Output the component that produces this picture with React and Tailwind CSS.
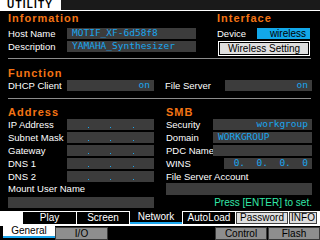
import React from "react";

const Title = ({ children, className = "" }) => (
  <div className={`h-[11px] text-[11px] leading-[11px] font-bold tracking-[1px] text-[#f47414] whitespace-nowrap ${className}`}>
    {children}
  </div>
);

const Label = ({ w, children }) => (
  <div className={`${w} shrink-0 text-[9.5px] leading-[11px] text-white whitespace-nowrap`}>{children}</div>
);

const Field = ({ w, right, h = "h-[11px]", children }) => (
  <div
    className={`${w} ${h} shrink-0 bg-[#3c3c3c] flex items-center ${right ? "justify-end pr-[4px]" : "pl-[5px]"} text-[#1aa6ee] text-[9.5px] leading-[10px] font-['DejaVu_Sans_Mono',monospace] whitespace-pre`}
  >
    <span className="-mt-[1px]">{children}</span>
  </div>
);

const IpField = () => (
  <div className="w-[87px] h-[11px] shrink-0 bg-[#3c3c3c] flex items-end pb-[2px]">
    <span className="w-px h-px bg-[#1aa6ee] ml-[21px]" />
    <span className="w-px h-px bg-[#1aa6ee] ml-[21px]" />
    <span className="w-px h-px bg-[#1aa6ee] ml-[22px]" />
  </div>
);

const Sep = () => <div className="ml-[8px] w-[303px] h-px bg-[#8c8c8c] shrink-0" />;

const DarkTab = ({ w, children }) => (
  <div className={`${w} mt-[1px] h-[12px] bg-black text-white text-[10px] leading-[12px] text-center`}>{children}</div>
);

const LightTab = ({ w, children }) => (
  <div className={`${w} mt-[1px] h-[12px] bg-[#dedede] border border-[#404040] text-black text-[10px] leading-[10px] text-center`}>
    {children}
  </div>
);

const GrayTab = ({ w, children }) => (
  <div className={`${w} mt-[1px] h-[13px] bg-[#8e8e8e] border border-[#3a3a3a] text-black text-[10px] leading-[11px] text-center`}>
    {children}
  </div>
);

export default function App() {
  const ipRows = ["IP Address", "Subnet Mask", "Gateway", "DNS 1", "DNS 2"];

  return (
    <div className="w-[320px] h-[240px] bg-black overflow-hidden flex flex-col font-['Liberation_Sans',Arial,sans-serif]">
      {/* header */}
      <div className="h-[11px] flex shrink-0 border-b border-white">
        <div className="w-[61px] h-[10px] bg-white text-black text-[10px] font-bold tracking-[1.2px] leading-[10px] pl-[7px]">
          UTILITY
        </div>
        <div className="flex-1 h-[10px] bg-[#1a1a1a]" />
      </div>

      <div className="h-[200px] flex flex-col shrink-0">
        {/* information / interface */}
        <div className="h-[47px] flex px-[8px] shrink-0">
          <div className="w-[209px] flex flex-col">
            <Title className="mt-[2px]">Information</Title>
            <div className="flex items-center mt-[4px]">
              <Label w="w-[59px]">Host Name</Label>
              <Field w="w-[129px]">MOTIF_XF-6d58f8</Field>
            </div>
            <div className="flex items-center mt-[2px]">
              <Label w="w-[59px]">Description</Label>
              <Field w="w-[129px]">YAMAHA_Synthesizer</Field>
            </div>
          </div>
          <div className="flex flex-col">
            <Title className="mt-[2px]">Interface</Title>
            <div className="flex items-center mt-[4px]">
              <Label w="w-[40px]">Device</Label>
              <div className="w-[53px] h-[11px] bg-[#12a8ea] text-black text-[10px] leading-[11px] text-right pr-[4px]">
                wireless
              </div>
            </div>
            <div className="mt-[2px] ml-[1px] w-[92px] h-[15px] bg-[#dedede] border border-white shadow-[inset_0_0_0_1px_#000] text-black text-[10px] leading-[13px] text-center">
              Wireless Setting
            </div>
          </div>
        </div>

        <Sep />

        {/* function */}
        <div className="h-[39px] flex flex-col px-[8px] shrink-0">
          <Title className="mt-[9px]">Function</Title>
          <div className="flex mt-[1px]">
            <div className="w-[157px] flex items-center">
              <Label w="w-[59px]">DHCP Client</Label>
              <Field w="w-[87px]" right>on</Field>
            </div>
            <div className="flex items-center">
              <Label w="w-[60px]">File Server</Label>
              <Field w="w-[87px]" right>on</Field>
            </div>
          </div>
        </div>

        <Sep />

        {/* address / smb */}
        <div className="flex px-[8px] flex-1">
          <div className="w-[158px] flex flex-col">
            <Title className="mt-[8px]">Address</Title>
            <div className="flex flex-col gap-[2px] mt-[1px]">
              {ipRows.map((l) => (
                <div key={l} className="flex items-center h-[11px]">
                  <Label w="w-[59px]">{l}</Label>
                  <IpField />
                </div>
              ))}
            </div>
            <div className="mt-[1px] h-[12px] text-[9.5px] leading-[12px] text-white">Mount User Name</div>
            <Field w="w-[146px]" h="h-[11px] mt-[2px]"> </Field>
          </div>
          <div className="w-[146px] flex flex-col">
            <Title className="mt-[8px]">SMB</Title>
            <div className="flex flex-col gap-[2px] mt-[1px]">
              <div className="flex items-center h-[11px]">
                <Label w="w-[47px]">Security</Label>
                <Field w="w-[99px]" right>workgroup</Field>
              </div>
              <div className="flex items-center h-[11px]">
                <Label w="w-[47px]">Domain</Label>
                <Field w="w-[99px]">WORKGROUP</Field>
              </div>
              <div className="flex items-center h-[11px]">
                <Label w="w-[47px]">PDC Name</Label>
                <Field w="w-[99px]"> </Field>
              </div>
              <div className="flex items-center h-[11px]">
                <Label w="w-[58px]">WINS</Label>
                <Field w="w-[88px]" right>{"0.  0.  0.  0"}</Field>
              </div>
            </div>
            <div className="mt-[2px] h-[12px] text-[9.5px] leading-[12px] text-white whitespace-nowrap">File Server Account</div>
            <Field w="w-[146px]" h="h-[12px]"> </Field>
            <div className="mt-[2px] h-[12px] text-[10px] leading-[12px] text-[#33e8a8] text-right whitespace-nowrap">
              Press [ENTER] to set.
            </div>
          </div>
        </div>
      </div>

      {/* tab row 1 */}
      <div className="h-[15px] bg-white flex gap-px shrink-0">
        <div className="w-[22px]" />
        <DarkTab w="w-[53px]">Play</DarkTab>
        <DarkTab w="w-[52px]">Screen</DarkTab>
        <div className="w-[52px] h-[13px] bg-black border-b-2 border-[#1aa6ee] text-white text-[10px] leading-[11px] text-center">
          Network
        </div>
        <DarkTab w="w-[52px]">AutoLoad</DarkTab>
        <LightTab w="w-[52px]">Password</LightTab>
        <LightTab w="w-[28px]">INFO</LightTab>
      </div>

      {/* tab row 2 */}
      <div className="flex-1 bg-black flex">
        <div className="ml-[3px] w-[52px] h-[12px] bg-white border-b-2 border-[#1aa6ee] text-black text-[10px] leading-[10px] text-center">
          General
        </div>
        <GrayTab w="w-[53px]">I/O</GrayTab>
        <div className="flex-1" />
        <GrayTab w="w-[52px]">Control</GrayTab>
        <div className="w-px" />
        <GrayTab w="w-[52px]">Flash</GrayTab>
      </div>
    </div>
  );
}
